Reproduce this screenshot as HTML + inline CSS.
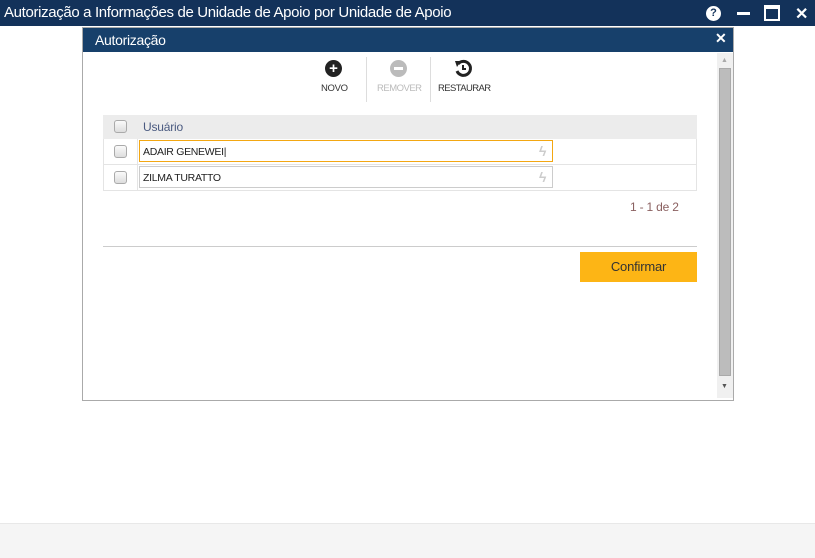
<!DOCTYPE html><html><head><meta charset="utf-8"><style>
*{margin:0;padding:0;box-sizing:border-box}
body{width:815px;height:558px;position:relative;background:#fff;font-family:"Liberation Sans",sans-serif;overflow:hidden}
.a{position:absolute}
.tb{left:0;top:0;width:815px;height:26px;background:#13325a;color:#fff;font-size:15px;line-height:25px;padding-left:4px;letter-spacing:-0.35px}
.cb{width:13px;height:13px;border:1px solid #aaa;border-radius:3px;background:linear-gradient(#fafafa,#ddd)}
.inp{height:22px;border:1px solid #ccc;font-size:10.5px;line-height:22px;padding-left:3px;color:#222;letter-spacing:-0.3px}
</style></head><body>
<div class="a tb">Autorização a Informações de Unidade de Apoio por Unidade de Apoio</div>
<div class="a" style="left:706px;top:6px;width:15px;height:15px;border-radius:50%;background:#fff;color:#13325a;font-weight:bold;font-size:11px;text-align:center;line-height:15px">?</div>
<div class="a" style="left:737px;top:12px;width:13px;height:3px;background:#fff"></div>
<div class="a" style="left:764px;top:5px;width:16px;height:16px;border:2px solid #fff;border-top-width:4px"></div>
<div class="a" style="left:795px;top:4px;color:#fff;font-weight:bold;font-size:16px">✕</div>
<div class="a" style="left:82px;top:27px;width:652px;height:374px;border:1px solid #aaa;background:#fff"></div>
<div class="a" style="left:83px;top:28px;width:650px;height:24px;background:#17406b;color:#fff;font-size:14px;line-height:24px;padding-left:12px;letter-spacing:-0.3px">Autorização</div>
<div class="a" style="left:715px;top:30px;color:#fff;font-weight:bold;font-size:14px">✕</div>
<div class="a" style="left:325px;top:60px;width:17px;height:17px;border-radius:50%;background:#222;color:#fff;font-weight:bold;font-size:15px;text-align:center;line-height:17px">+</div>
<div class="a" style="left:321px;top:83px;font-size:9.5px;color:#333;letter-spacing:-0.3px">NOVO</div>
<div class="a" style="left:366px;top:57px;width:1px;height:45px;background:#ddd"></div>
<div class="a" style="left:390px;top:60px;width:17px;height:17px;border-radius:50%;background:#bbb"><div class="a" style="left:4px;top:7px;width:9px;height:3px;background:#fff"></div></div>
<div class="a" style="left:377px;top:83px;font-size:9.5px;color:#bbb;letter-spacing:-0.5px">REMOVER</div>
<div class="a" style="left:430px;top:57px;width:1px;height:45px;background:#ddd"></div>
<svg class="a" style="left:453px;top:59px" width="20" height="19" viewBox="0 0 20 19"><path d="M5 5 A7 7 0 1 1 4 12" fill="none" stroke="#222" stroke-width="3"/><path d="M2 2 L8 2 L4 8Z" fill="#222"/><path d="M10 6 V10 H13" stroke="#222" stroke-width="2" fill="none"/></svg>
<div class="a" style="left:438px;top:83px;font-size:9.5px;color:#333;letter-spacing:-0.6px">RESTAURAR</div>
<div class="a" style="left:103px;top:115px;width:594px;height:24px;background:#ececec"></div>
<div class="a cb" style="left:114px;top:120px"></div>
<div class="a" style="left:143px;top:120px;font-size:12px;color:#4a5a80;letter-spacing:-0.2px">Usuário</div>
<div class="a" style="left:103px;top:139px;width:594px;height:52px;border:1px solid #e4e4e4;border-top:none"></div>
<div class="a" style="left:103px;top:164px;width:594px;height:1px;background:#e4e4e4"></div>
<div class="a" style="left:137px;top:139px;width:1px;height:51px;background:#e4e4e4"></div>
<div class="a cb" style="left:114px;top:145px"></div>
<div class="a cb" style="left:114px;top:171px"></div>
<div class="a inp" style="left:139px;top:140px;width:414px;border-color:#f3a712">ADAIR GENEWEI|</div>
<div class="a inp" style="left:139px;top:166px;width:414px">ZILMA TURATTO</div>
<div class="a" style="left:539px;top:143px;color:#ccc;font-size:14px;font-weight:bold">ϟ</div>
<div class="a" style="left:539px;top:169px;color:#ccc;font-size:14px;font-weight:bold">ϟ</div>
<div class="a" style="left:630px;top:200px;font-size:12px;color:#8a6060;letter-spacing:-0.2px">1 - 1 de 2</div>
<div class="a" style="left:103px;top:246px;width:594px;height:1px;background:#ccc"></div>
<div class="a" style="left:580px;top:252px;width:117px;height:30px;background:#fdb515;color:#333;font-size:13px;text-align:center;line-height:30px;letter-spacing:-0.2px">Confirmar</div>
<div class="a" style="left:717px;top:53px;width:16px;height:345px;background:#f0f0f0"></div>
<div class="a" style="left:719px;top:68px;width:12px;height:308px;background:#bcbcbc;border:1px solid #aaa"></div>
<div class="a" style="left:721px;top:57px;font-size:7px;color:#aaa">▲</div>
<div class="a" style="left:721px;top:383px;font-size:7px;color:#555">▼</div>
<div class="a" style="left:0;top:523px;width:815px;height:35px;background:#f5f5f5;border-top:1px solid #e8e8e8"></div>
</body></html>
